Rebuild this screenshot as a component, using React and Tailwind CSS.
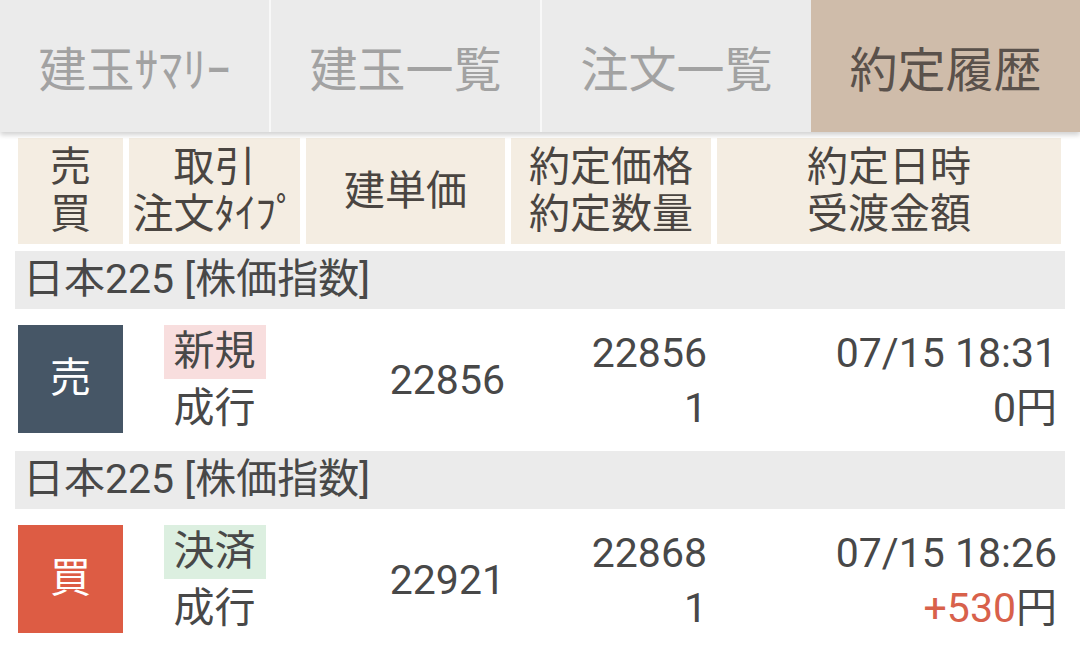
import React from 'react';

const font = { fontFamily: "Roboto, 'Noto Sans CJK JP', sans-serif" };

const tabs = [
  { label: '建玉ｻﾏﾘｰ' },
  { label: '建玉一覧' },
  { label: '注文一覧' },
  { label: '約定履歴', active: true },
];

const trades = [
  {
    name: '日本225 [株価指数]',
    side: '売',
    kind: '新規',
    type: '成行',
    price: '22856',
    execPrice: '22856',
    qty: '1',
    time: '07/15 18:31',
    amount: '0',
  },
  {
    name: '日本225 [株価指数]',
    side: '買',
    kind: '決済',
    type: '成行',
    price: '22921',
    execPrice: '22868',
    qty: '1',
    time: '07/15 18:26',
    amount: '+530',
  },
];

const cols = 'grid grid-cols-[105px_171px_199px_200px_344px] gap-x-[6px]';

function Tabs() {
  return (
    <div className="relative z-10 flex h-[132px] shadow-[0_3px_5px_rgba(0,0,0,0.18)]">
      {tabs.map((t, i) => (
        <div
          key={t.label}
          className={
            t.active
              ? 'flex flex-1 items-center justify-center bg-[#cfbcaa] pt-[10px] text-[48px] text-[#5a514b]'
              : i === 0
                ? 'flex flex-1 items-center justify-center bg-[#ebebeb] pt-[10px] text-[48px] text-[#a2a2a2]'
                : 'flex flex-1 items-center justify-center border-l-2 border-[#f8f8f8] bg-[#ebebeb] pt-[10px] text-[48px] text-[#a2a2a2]'
          }
        >
          {t.label}
        </div>
      ))}
    </div>
  );
}

function HeaderCell({ children }) {
  return (
    <div className="flex flex-col items-center justify-center bg-[#f4ede2] text-[41px] leading-[47px] text-[#4a4541]">
      {children}
    </div>
  );
}

function Header() {
  return (
    <div className={`${cols} h-[106px] px-[3px]`}>
      <HeaderCell>
        <span>売</span>
        <span>買</span>
      </HeaderCell>
      <HeaderCell>
        <span>取引</span>
        <span>注文ﾀｲﾌﾟ</span>
      </HeaderCell>
      <HeaderCell>
        <span>建単価</span>
      </HeaderCell>
      <HeaderCell>
        <span>約定価格</span>
        <span>約定数量</span>
      </HeaderCell>
      <HeaderCell>
        <span>約定日時</span>
        <span>受渡金額</span>
      </HeaderCell>
    </div>
  );
}

function TradeRow({ t }) {
  const sell = t.side === '売';
  return (
    <div>
      <div className="flex h-[58px] items-center bg-[#ebebeb] pl-[8px] text-[41px] text-[#484848]">
        {t.name}
      </div>
      <div className={`${cols} h-[142px] px-[3px] pt-[16px] text-[41px] text-[#484848]`}>
        <div
          className={
            sell
              ? 'flex h-[108px] items-center justify-center bg-[#465666] text-white'
              : 'flex h-[108px] items-center justify-center bg-[#dd5c44] text-white'
          }
        >
          {t.side}
        </div>
        <div className="flex flex-col items-center">
          <span
            className={
              sell
                ? 'flex h-[54px] items-center bg-[#f8dede] px-[10px]'
                : 'flex h-[54px] items-center bg-[#dcefe0] px-[10px]'
            }
          >
            {t.kind}
          </span>
          <span className="leading-[58px]">{t.type}</span>
        </div>
        <div className="flex h-[108px] items-center justify-end pt-[4px]">{t.price}</div>
        <div className="flex h-[108px] flex-col items-end justify-center pr-[4px] pt-[4px] leading-[55px]">
          <span>{t.execPrice}</span>
          <span>{t.qty}</span>
        </div>
        <div className="flex h-[108px] flex-col items-end justify-center pr-[4px] pt-[4px] leading-[55px]">
          <span>{t.time}</span>
          <span>
            <span className={t.amount.startsWith('+') ? 'text-[#d8614b]' : ''}>{t.amount}</span>円
          </span>
        </div>
      </div>
    </div>
  );
}

export default function App() {
  return (
    <div className="h-[648px] w-[1080px] overflow-hidden bg-white" style={font}>
      <Tabs />
      <div className="px-[15px] pt-[6px]">
        <Header />
        <div className="h-[7px]" />
        {trades.map((t, i) => (
          <TradeRow key={i} t={t} />
        ))}
      </div>
    </div>
  );
}
